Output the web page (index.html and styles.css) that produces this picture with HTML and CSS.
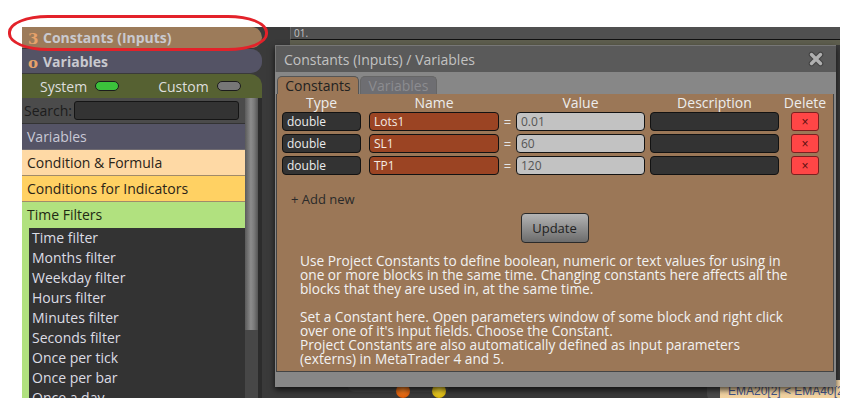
FILE: index.html
```html
<!DOCTYPE html>
<html>
  <head>
    <meta charset="UTF-8">
    <title>Constants (Inputs) / Variables</title>
    <link rel="stylesheet" href="styles.css">
  </head>
  <body>
    <div class="app">
      <aside class="sidebar">
        <div class="sb-head sb-constants"><span class="num">3</span>Constants (Inputs)</div>
        <div class="sb-head sb-vars"><span class="num">o</span>Variables</div>
        <div class="sb-switch">
          <span class="sw-label">System</span><span class="pill on"></span>
          <span class="sw-label custom">Custom</span><span class="pill"></span>
        </div>
        <div class="sb-body">
          <div class="sb-list">
            <div class="search"><label>Search:</label><input type="text"></div>
            <div class="cat cat-vars">Variables</div>
            <div class="cat cat-formula">Condition &amp; Formula</div>
            <div class="cat cat-ind">Conditions for Indicators</div>
            <div class="cat cat-time">Time Filters</div>
            <ul class="items">
              <li>Time filter</li>
              <li>Months filter</li>
              <li>Weekday filter</li>
              <li>Hours filter</li>
              <li>Minutes filter</li>
              <li>Seconds filter</li>
              <li>Once per tick</li>
              <li>Once per bar</li>
              <li>Once a day</li>
            </ul>
          </div>
          <div class="scrollbar"><div class="thumb"></div></div>
          <div class="gutter"></div>
        </div>
      </aside>

      <main class="workspace">
        <div class="tabstrip"><span class="page-tab">01.</span></div>
        <div class="canvas">
          <div class="block block-dark" style="left: 57px; top: 330px; width: 103px;"></div>
          <div class="dot dot-orange" style="left: 106px; top: 339px;"></div>
          <div class="dot dot-yellow" style="left: 142px; top: 339px;"></div>
          <div class="block block-gray" style="left: 417px; top: 333px; width: 40px;"></div>
          <div class="block block-cond" style="left: 430px; top: 335px;">EMA20[2] &lt; EMA40[2]</div>

          <div class="modal">
            <div class="modal-title">
              <span>Constants (Inputs) / Variables</span>
              <svg class="close" width="16" height="16" viewBox="0 0 16 16">
                <path d="M3.5 3.5 L12.5 12.5 M12.5 3.5 L3.5 12.5" stroke="#444" stroke-width="5.6" stroke-linecap="round"/>
                <path d="M3.5 3.5 L12.5 12.5 M12.5 3.5 L3.5 12.5" stroke="#b0b0b0" stroke-width="3.4" stroke-linecap="round"/>
              </svg>
            </div>
            <div class="tabs">
              <span class="tab active">Constants</span>
              <span class="tab">Variables</span>
            </div>
            <div class="panel">
              <div class="row head">
                <span class="c-type">Type</span>
                <span class="c-name">Name</span>
                <span class="c-eq"></span>
                <span class="c-value">Value</span>
                <span class="c-desc">Description</span>
                <span class="c-del">Delete</span>
              </div>
              <div class="row">
                <span class="c-type box">double</span>
                <span class="c-name box">Lots1</span>
                <span class="c-eq">=</span>
                <span class="c-value box">0.01</span>
                <span class="c-desc box"></span>
                <span class="c-del"><button class="del">&times;</button></span>
              </div>
              <div class="row">
                <span class="c-type box">double</span>
                <span class="c-name box">SL1</span>
                <span class="c-eq">=</span>
                <span class="c-value box">60</span>
                <span class="c-desc box"></span>
                <span class="c-del"><button class="del">&times;</button></span>
              </div>
              <div class="row">
                <span class="c-type box">double</span>
                <span class="c-name box">TP1</span>
                <span class="c-eq">=</span>
                <span class="c-value box">120</span>
                <span class="c-desc box"></span>
                <span class="c-del"><button class="del">&times;</button></span>
              </div>
              <div class="add-new">+ Add new</div>
              <div class="actions"><button class="update">Update</button></div>
              <p class="help">
                Use Project Constants to define boolean, numeric or text values for using in<br>
                one or more blocks in the same time. Changing constants here affects all the<br>
                blocks that they are used in, at the same time.<br>
                <br>
                Set a Constant here. Open parameters window of some block and right click<br>
                over one of it's input fields. Choose the Constant.<br>
                Project Constants are also automatically defined as input parameters<br>
                (externs) in MetaTrader 4 and 5.
              </p>
            </div>
          </div>
        </div>
      </main>
    </div>
    <div class="annotation"></div>
  </body>
</html>
```

FILE: styles.css
```css
body {
  margin: 0;
  background-color: #fff;
  font-family: 'Open Sans', 'DejaVu Sans', sans-serif;
}
.app {
  display: flex;
  width: 818px;
  height: 371px;
  margin: 27px 0 0 22px;
  overflow: hidden;
  background-color: #3a3a3a;
}

/* sidebar */
.sidebar {
  width: 240px;
  flex: none;
  display: flex;
  flex-direction: column;
  background-color: #3a3a3a;
}
.sb-head {
  display: flex;
  align-items: center;
  flex: none;
  padding-left: 6px;
  font-size: 14px;
  font-weight: bold;
  color: #c9c9cf;
  border-radius: 0 11px 11px 0;
}
.sb-head .num {
  width: 15px;
  font-family: 'DejaVu Serif', serif;
  font-size: 15px;
  color: #e7a26a;
  margin-top: 3px;
}
.sb-constants {
  height: 21px;
  background-color: #9c7b5a;
}
.sb-vars {
  height: 24px;
  margin-top: 1px;
  background-color: #545365;
}
.sb-switch {
  display: flex;
  align-items: center;
  flex: none;
  height: 24px;
  margin-top: 1px;
  padding-left: 18px;
  font-size: 14px;
  color: #dedede;
  background-color: #566132;
  border-radius: 0 12px 0 0;
}
.sw-label.custom {
  margin-left: 39px;
}
.pill {
  width: 22px;
  height: 8px;
  margin-left: 8px;
  border: 1px solid #1c1c1c;
  border-radius: 5px;
  background-color: #777;
}
.pill.on {
  background-color: #3bc23b;
}
.sb-body {
  display: flex;
  flex: 1;
  min-height: 0;
}
.sb-list {
  width: 223px;
  flex: none;
  display: flex;
  flex-direction: column;
}
.search {
  display: flex;
  align-items: center;
  flex: none;
  height: 25px;
  padding-left: 2px;
  background-color: #4b4b4b;
  border-bottom: 1px solid #333;
}
.search label {
  font-size: 14px;
  color: #1c1c1c;
}
.search input {
  width: 161px;
  height: 15px;
  margin-left: 2px;
  padding: 1px;
  border: 1px solid #151515;
  border-radius: 3px;
  background-color: #333;
}
.cat {
  flex: none;
  height: 25px;
  line-height: 25px;
  padding-left: 5px;
  font-size: 14px;
  border-bottom: 1px solid #a08a6a;
}
.cat-vars {
  color: #c9c9d6;
  background-color: #555466;
  border-bottom-color: #6e6a70;
}
.cat-formula {
  color: #2a2418;
  background-color: #fed9a5;
}
.cat-ind {
  color: #2a2418;
  background-color: #ffd163;
}
.cat-time {
  color: #1f2a14;
  background-color: #b1e17f;
  border-bottom: none;
  height: 26px;
}
.items {
  list-style: none;
  flex: none;
  margin: 0;
  padding: 0;
  background-color: #333;
  border-left: 7px solid #b1e17f;
}
.items li {
  height: 20px;
  line-height: 20px;
  padding-left: 3px;
  font-size: 14px;
  color: #dcdce4;
  white-space: nowrap;
}
.scrollbar {
  width: 13px;
  flex: none;
  background-color: #474747;
}
.thumb {
  height: 232px;
  background: linear-gradient(to right, #5a5a5a, #8c8c8c 45%, #7a7a7a 70%, #555);
}
.gutter {
  width: 4px;
  flex: none;
  background-color: #2c2c2c;
}

/* workspace */
.workspace {
  flex: 1;
  display: flex;
  flex-direction: column;
  min-width: 0;
}
.tabstrip {
  padding-left: 28px;
}
.page-tab {
  display: block;
  height: 12px;
  padding-left: 3px;
  font-size: 10px;
  line-height: 12px;
  color: #c4c4c4;
  background-color: #505050;
  border-left: 1px solid #666;
  border-bottom: 1px solid #111;
}
.canvas {
  position: relative;
  flex: 1;
  border-top: 5px solid #5e5e4e;
  margin-left: 28px;
}
.block {
  position: absolute;
  height: 24px;
  border-radius: 8px;
}
.block-dark {
  background-color: #444;
  height: 17px;
}
.block-gray {
  background-color: #4a4a4a;
}
.block-cond {
  padding: 0 8px;
  height: 30px;
  line-height: 22px;
  font-family: 'Liberation Sans', sans-serif;
  font-size: 12px;
  color: #43558a;
  background: linear-gradient(#f7dcb0, #f1cc95);
  border-radius: 8px 0 0 8px;
  white-space: nowrap;
}
.dot {
  position: absolute;
  width: 14px;
  height: 14px;
  border-radius: 50%;
}
.dot-orange {
  background: radial-gradient(circle at 50% 35%, #ff8a2a, #d24e00);
}
.dot-yellow {
  background: radial-gradient(circle at 50% 35%, #ffe23a, #c9a600);
}

/* modal */
.modal {
  position: absolute;
  left: -15px;
  top: 0;
  width: 561px;
  height: 342px;
  background-color: #878787;
  box-shadow: 0 3px 6px rgba(0, 0, 0, 0.7);
  display: flex;
  flex-direction: column;
}
.modal-title {
  display: flex;
  align-items: center;
  justify-content: space-between;
  height: 27px;
  padding: 0 12px 0 8px;
  font-size: 14px;
  color: #c2c2c2;
  background-color: #5a5a5a;
  border-top: 1px solid #777;
  border-left: 1px solid #777;
  box-sizing: border-box;
}
.tabs {
  display: flex;
  height: 22px;
  padding: 4px 0 0 2px;
  box-sizing: border-box;
}
.tab {
  width: 82px;
  height: 18px;
  margin-right: 1px;
  font-size: 14px;
  line-height: 18px;
  text-align: center;
  color: #8c8c90;
  background-color: #6e6e72;
  border: 1px solid #666;
  border-bottom: none;
  border-radius: 5px 5px 0 0;
  box-sizing: border-box;
}
.tab.active {
  color: #222;
  background-color: #9b7757;
  border-color: #555;
}
.tab + .tab {
  width: 77px;
}
.panel {
  height: 278px;
  margin: 0 2px 0 1px;
  padding: 0 0 0 5px;
  background-color: #9b7757;
  border: 1px solid #444;
  border-top: none;
  box-sizing: border-box;
}
.row {
  display: flex;
  align-items: center;
  height: 19px;
  margin-bottom: 3px;
}
.row.head {
  height: 17px;
  margin-bottom: 1px;
  font-size: 14px;
  color: #ededed;
}
.row.head span {
  text-align: center;
}
.c-type {
  width: 79px;
}
.c-name {
  width: 130px;
  margin-left: 8px;
}
.c-eq {
  width: 17px;
  text-align: center;
  font-size: 13px;
  color: #e4e4e4;
}
.c-value {
  width: 129px;
}
.c-desc {
  width: 129px;
  margin-left: 5px;
}
.c-del {
  width: 46px;
  margin-left: 3px;
  display: flex;
  justify-content: center;
}
.row.head .c-del {
  display: block;
}
.box {
  height: 19px;
  padding-left: 4px;
  font-size: 12px;
  line-height: 18px;
  color: #ececec;
  background-color: #333;
  border: 1px solid #121212;
  border-radius: 4px;
  box-sizing: border-box;
}
.c-name.box {
  color: #f4ece4;
  background-color: #9b4423;
}
.c-value.box {
  color: #555;
  background-color: #c2c2c2;
}
.del {
  width: 28px;
  height: 19px;
  padding: 0;
  font-size: 12px;
  line-height: 16px;
  color: #5a1010;
  background-color: #ff4646;
  border: 1px solid #7a2020;
  border-radius: 3px;
}
.add-new {
  margin: 15px 0 0 9px;
  font-size: 13px;
  color: #2a2a2a;
}
.actions {
  display: flex;
  justify-content: center;
  margin-top: 5px;
}
.update {
  width: 68px;
  height: 30px;
  margin-right: 6px;
  font-family: 'Open Sans', sans-serif;
  font-size: 13px;
  color: #222;
  background: linear-gradient(#b4b4b4, #6c6c6c);
  border: 1px solid #2a2a2a;
  border-radius: 4px;
}
.help {
  margin: 11px 0 0 18px;
  font-size: 13.7px;
  line-height: 14px;
  color: #f2f2f2;
  white-space: nowrap;
}

/* red highlight drawn over the screenshot */
.annotation {
  position: absolute;
  left: 8px;
  top: 15px;
  width: 254px;
  height: 30px;
  border: 3px solid #e3222a;
  border-radius: 40px / 17px;
}
```
